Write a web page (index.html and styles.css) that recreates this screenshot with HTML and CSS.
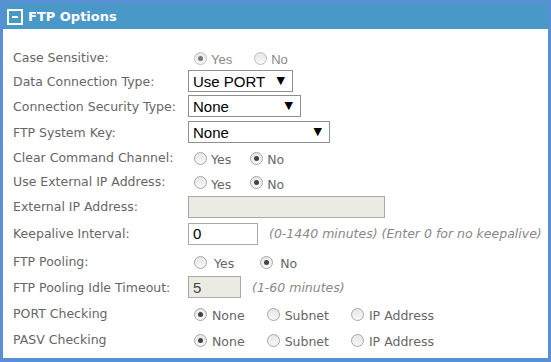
FILE: index.html
```html
<!DOCTYPE html>
<html lang="en">
<head>
  <meta charset="UTF-8" />
  <title>FTP Options</title>
  <link rel="stylesheet" href="styles.css">
</head>
<body>

<div class="panel">
  <div class="panel-head">
    <span class="toggle"></span>
    <span class="panel-title">FTP Options</span>
  </div>

  <div class="panel-body">
    <div class="row r24">
      <label class="lbl">Case Sensitive:</label>
      <div class="opts disabled">
        <label class="opt"><input type="radio" name="cs" checked disabled><span>Yes</span></label>
        <label class="opt"><input type="radio" name="cs" disabled><span>No</span></label>
      </div>
    </div>

    <div class="row r24">
      <label class="lbl">Data Connection Type:</label>
      <span class="sel w105"><select><option>Use PORT</option><option>Use PASV</option></select></span>
    </div>

    <div class="row r26">
      <label class="lbl">Connection Security Type:</label>
      <span class="sel w113"><select><option>None</option></select></span>
    </div>

    <div class="row r26">
      <label class="lbl">FTP System Key:</label>
      <span class="sel w142"><select><option>None</option></select></span>
    </div>

    <div class="row r24">
      <label class="lbl">Clear Command Channel:</label>
      <div class="opts">
        <label class="opt"><input type="radio" name="ccc"><span>Yes</span></label>
        <label class="opt"><input type="radio" name="ccc" checked><span>No</span></label>
      </div>
    </div>

    <div class="row r25">
      <label class="lbl">Use External IP Address:</label>
      <div class="opts">
        <label class="opt"><input type="radio" name="ext"><span>Yes</span></label>
        <label class="opt"><input type="radio" name="ext" checked><span>No</span></label>
      </div>
    </div>

    <div class="row r25">
      <label class="lbl">External IP Address:</label>
      <input type="text" class="txt w197" disabled>
    </div>

    <div class="row r29">
      <label class="lbl">Keepalive Interval:</label>
      <input type="text" class="txt w70" value="0">
      <span class="hint">(0-1440 minutes) (Enter 0 for no keepalive)</span>
    </div>

    <div class="row r26">
      <label class="lbl">FTP Pooling:</label>
      <div class="opts wide">
        <label class="opt"><input type="radio" name="pool"><span>Yes</span></label>
        <label class="opt"><input type="radio" name="pool" checked><span>No</span></label>
      </div>
    </div>

    <div class="row r26">
      <label class="lbl">FTP Pooling Idle Timeout:</label>
      <input type="text" class="txt w53" value="5" disabled>
      <span class="hint">(1-60 minutes)</span>
    </div>

    <div class="row r26">
      <label class="lbl">PORT Checking</label>
      <div class="opts three">
        <label class="opt"><input type="radio" name="port" checked><span>None</span></label>
        <label class="opt"><input type="radio" name="port"><span>Subnet</span></label>
        <label class="opt"><input type="radio" name="port"><span>IP Address</span></label>
      </div>
    </div>

    <div class="row r26">
      <label class="lbl">PASV Checking</label>
      <div class="opts three">
        <label class="opt"><input type="radio" name="pasv" checked><span>None</span></label>
        <label class="opt"><input type="radio" name="pasv"><span>Subnet</span></label>
        <label class="opt"><input type="radio" name="pasv"><span>IP Address</span></label>
      </div>
    </div>
  </div>
</div>

</body>
</html>
```

FILE: styles.css
```css
html, body {
  margin: 0; padding: 0; background: #5a8fd8;
}
body {
  font-family: "DejaVu Sans", Verdana, sans-serif; font-size: 12.5px; color: #666;
}
.panel {
  width: 545px; height: 355px; margin: 0; border: 3px solid #5a8fd8; border-bottom-width: 4px;
  background: #fff; display: flex; flex-direction: column;
}
.panel-head {
  height: 26px; background: #4a98c8; color: #fff;
  display: flex; align-items: center; padding-left: 4px; gap: 5px;
}
.toggle {
  width: 12px; height: 12px; border: 2px solid #fff; position: relative; margin-top: 1px;
}
.toggle::after {
  content: ""; position: absolute; left: 3px; right: 3px; top: 5px; height: 2px; background: #fff;
}
.panel-title {
  font-weight: bold; font-size: 13px;
}
.panel-body {
  padding: 16px 0 0 10px;
}
.row {
  display: flex; align-items: center;
}
.r24 { height: 24px; }
.r25 { height: 25px; }
.r26 { height: 26px; }
.r29 { height: 29px; }
.lbl {
  width: 175px; flex: none;
}
/* radios */
.opts {
  display: flex; align-items: center; padding-top: 2px;
}
.opt {
  display: flex; align-items: center; margin-right: 13px; color: #666;
}
.opt span { padding-top: 3px; }
.opts.disabled .opt { font-family: "Liberation Sans", Arial, sans-serif; font-size: 13px; color: #888; margin-right: 16px; }
.opts.wide .opt { margin-right: 20px; }
.opts.wide .opt span { margin-left: 3px; }
.opts.three .opt { margin-right: 16px; }
.opts.three .opt span { margin-left: 1px; }
input[type=radio] {
  appearance: none; -webkit-appearance: none; margin: 0 4px 0 6px;
  width: 13px; height: 13px; border-radius: 50%; border: 1px solid #a6a6a6;
  background: linear-gradient(#e6e6e6, #f8f8f8); box-sizing: border-box; position: relative;
}
input[type=radio]:checked::after {
  content: ""; position: absolute; left: 3px; top: 3px; width: 5px; height: 5px;
  border-radius: 50%; background: #444;
}
input[type=radio]:disabled { border-color: #bdbdbd; }
input[type=radio]:disabled:checked::after { background: #777; }
/* selects */
.sel {
  position: relative; display: inline-block; height: 22px;
}
.sel select {
  appearance: none; -webkit-appearance: none; width: 100%; height: 22px;
  border: 1px solid #8f8f8f; background: #fff; color: #000; border-radius: 0;
  font-family: "Liberation Sans", Arial, sans-serif; font-size: 15px; padding: 0 0 0 4px; margin: 0;
}
.sel::after {
  content: "\25BC"; position: absolute; right: 8px; top: 4px; font-size: 11px; color: #000;
  font-family: "DejaVu Sans", sans-serif; pointer-events: none;
}
.w105 { width: 105px; }
.w113 { width: 113px; }
.w142 { width: 142px; }
/* text inputs */
.txt {
  height: 22px; box-sizing: border-box; border: 1px solid #a9a9a9; margin: 0; padding: 0 4px;
  font-family: "Liberation Sans", Arial, sans-serif; font-size: 15px; color: #000; background: #fff;
}
.txt:disabled { background: #ebebe4; color: #444; }
.w197 { width: 197px; }
.w70 { width: 70px; }
.w53 { width: 53px; }
.hint {
  font-style: italic; color: #888; margin-left: 11px; font-size: 12.5px;
}
```
